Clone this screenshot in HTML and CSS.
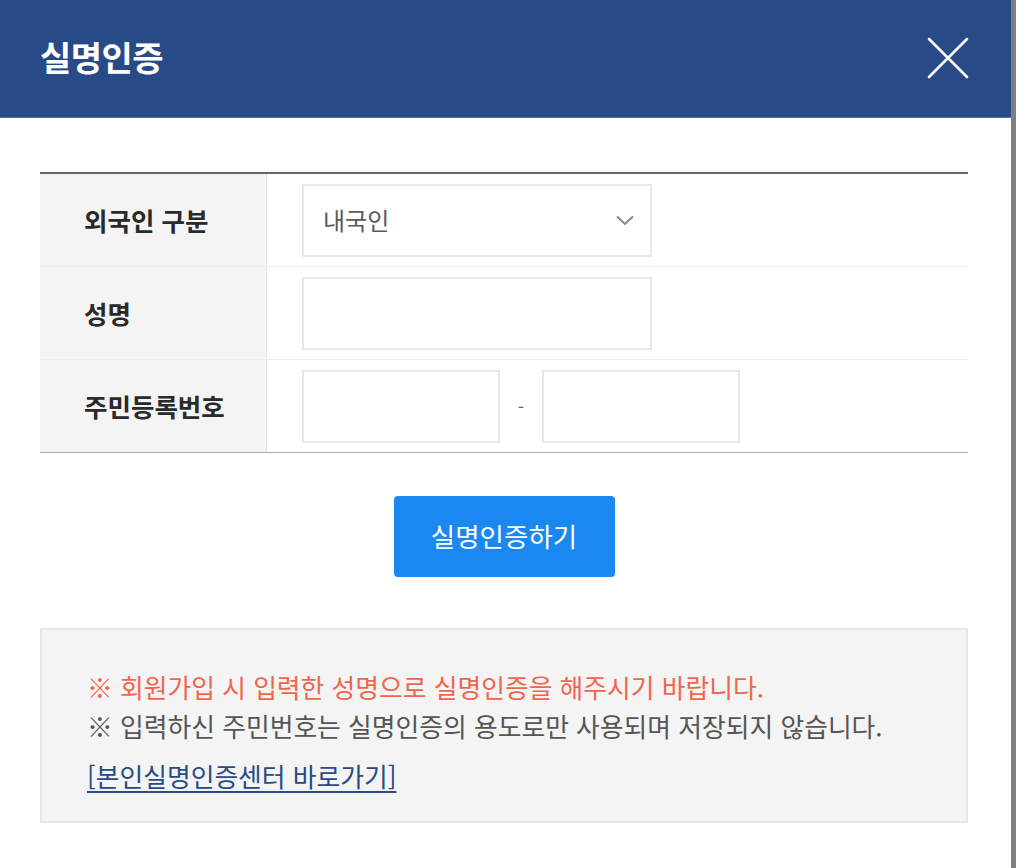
FILE: index.html
```html
<!DOCTYPE html>
<html lang="ko">
<head>
<meta charset="utf-8">
<title>실명인증</title>
<link rel="stylesheet" href="styles.css">
</head>
<body>
<div class="screen">
  <div class="modal">
    <header class="modal-head">
      <h1 class="modal-title">실명인증</h1>
      <button class="close-btn" type="button" aria-label="닫기">
        <svg width="42" height="42" viewBox="0 0 42 42"><path d="M2 2 L40 40 M40 2 L2 40" stroke="#fff" stroke-width="2.6" stroke-linecap="round" fill="none"/></svg>
      </button>
    </header>
    <div class="modal-body">
      <div class="form-table">
        <div class="row">
          <div class="label">외국인 구분</div>
          <div class="field">
            <div class="select">
              <span>내국인</span>
              <svg class="chev" width="18" height="11" viewBox="0 0 18 11"><path d="M1 1.5 L9 9 L17 1.5" stroke="#888" stroke-width="2" fill="none"/></svg>
            </div>
          </div>
        </div>
        <div class="row">
          <div class="label">성명</div>
          <div class="field"><div class="input wide"></div></div>
        </div>
        <div class="row">
          <div class="label">주민등록번호</div>
          <div class="field">
            <div class="input half"></div>
            <span class="dash">-</span>
            <div class="input half"></div>
          </div>
        </div>
      </div>
      <div class="btn-wrap">
        <button class="submit" type="button">실명인증하기</button>
      </div>
      <div class="notice">
        <p class="red">※ 회원가입 시 입력한 성명으로 실명인증을 해주시기 바랍니다.</p>
        <p class="gray">※ 입력하신 주민번호는 실명인증의 용도로만 사용되며 저장되지 않습니다.</p>
        <p class="link-line"><a href="#" class="link">[본인실명인증센터 바로가기]</a></p>
      </div>
    </div>
  </div>
  <div class="backdrop"></div>
</div>
</body>
</html>
```
FILE: styles.css
```css
html, body {
  margin: 0;
  padding: 0;
}
body {
  font-family: "Noto Sans CJK KR", "Noto Sans", sans-serif;
  background: #808080;
}
.screen {
  display: flex;
  width: 1016px;
  height: 868px;
  overflow: hidden;
}
.modal {
  width: 1011px;
  flex: none;
  background: #fff;
  height: 868px;
}
.backdrop {
  flex: 1;
  background: #7f7f7f;
}
.modal-head {
  height: 117px;
  background: #284a86;
  border-bottom: 1px solid #5a74a4;
  display: flex;
  align-items: center;
  justify-content: space-between;
  padding: 0 42px 0 40px;
}
.modal-title {
  margin: 0;
  color: #fff;
  font-size: 34px;
  font-weight: 700;
  letter-spacing: -0.5px;
  line-height: 1;
  padding-bottom: 4px;
}
.close-btn {
  background: none;
  border: 0;
  padding: 0;
  width: 42px;
  height: 42px;
  margin-bottom: 1px;
}
.close-btn svg { display: block; }
.modal-body {
  padding: 54px 43px 0 40px;
}
.form-table {
  border-top: 2px solid #666;
  border-bottom: 1px solid #aaa;
}
.row {
  display: flex;
  height: 92px;
  border-bottom: 1px solid #ececec;
}
.row:last-child { border-bottom: 0; }
.label {
  width: 227px;
  flex: none;
  background: #f4f4f4;
  border-right: 1px solid #e3e3e3;
  display: flex;
  align-items: center;
  padding-left: 44px;
  padding-bottom: 2px;
  box-sizing: border-box;
  font-size: 25.5px;
  font-weight: 700;
  color: #2a2a2a;
}
.field {
  display: flex;
  align-items: center;
  padding-left: 35px;
}
.select, .input {
  height: 73px;
  box-sizing: border-box;
  border: 2px solid #e8e8e8;
  background: #fff;
}
.select {
  width: 350px;
  display: flex;
  align-items: center;
  justify-content: space-between;
  padding: 0 16px 0 19px;
  font-size: 24px;
  color: #5a5a5a;
}
.select span { padding-bottom: 2px; }
.wide { width: 350px; }
.half { width: 198px; }
.dash {
  width: 42px;
  text-align: center;
  color: #666;
  font-size: 18px;
}
.btn-wrap {
  display: flex;
  justify-content: center;
  padding: 43px 0 51px;
}
.submit {
  width: 221px;
  height: 81px;
  background: #1a88ef;
  border: 0;
  border-radius: 4px;
  color: #fff;
  font-family: inherit;
  font-size: 26.5px;
  padding: 0 0 3px;
}
.notice {
  background: #f4f4f4;
  border: 2px solid #e6e6e6;
  height: 195px;
  box-sizing: border-box;
  padding: 37px 45px 0;
  font-size: 25.8px;
  line-height: 39px;
}
.notice p { margin: 0; }
.red { color: #f0664c; }
.gray { color: #555; }
.link-line { margin-top: 11px !important; }
.link {
  color: #284a86;
  text-decoration: underline;
  text-underline-offset: 4px;
}
```
